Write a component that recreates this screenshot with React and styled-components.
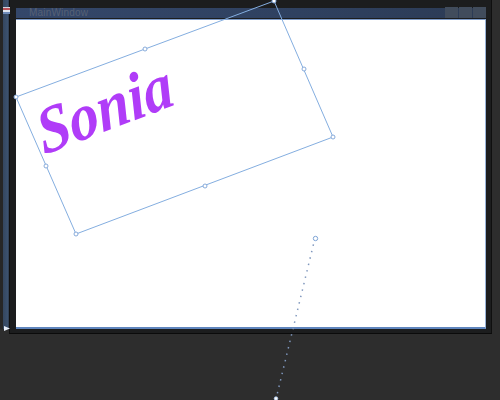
import React from "react";
import styled, { createGlobalStyle } from "styled-components";

const Global = createGlobalStyle`
  html, body { margin: 0; padding: 0; background: #2d2d2d; }
  #root { width: 500px; height: 400px; overflow: hidden; }
`;
const Stage = styled.div`
  position: relative;
  width: 500px;
  height: 400px;
  overflow: hidden;
  display: flex;
  align-items: flex-start;
  background: #2d2d2d;
`;
const SideRail = styled.div`
  position: relative;
  width: 9px;
  height: 329px;
  flex: none;
  box-sizing: border-box;
  padding-top: 7px;
  background: linear-gradient(90deg, #262626 0, #262626 3px, #34465f 3px, #3c526f 8px, #26303e 9px);
`;
const MenuGlyph = styled.div`
  width: 7px;
  height: 7px;
  margin-left: 3px;
  background: linear-gradient(180deg, #cfd6e2 0, #cfd6e2 20%, #b9525a 20%, #b9525a 42%, #dfe5ee 42%, #dfe5ee 70%, #6f8cb8 70%);
`;
const Window = styled.div`
  width: 483px;
  height: 334px;
  flex: none;
  box-sizing: border-box;
  padding: 8px 5px 4px 6px;
  display: flex;
  flex-direction: column;
  background: #1c1d1e;
  border-bottom: 1px solid #0b0b0b;
  border-right: 1px solid #0f0f0f;
  border-left: 1px solid #0f0f0f;
`;
const TitleBar = styled.div`
  height: 10px;
  flex: none;
  display: flex;
  align-items: center;
  justify-content: space-between;
  padding-left: 13px;
  background: linear-gradient(90deg, #34476a 0, #2f4160 60%, #2c3b55 100%);
`;
const Title = styled.span`
  font: 10px/10px "Liberation Sans", Arial, sans-serif;
  letter-spacing: 0.2px;
  color: #566176;
`;
const Controls = styled.div`
  display: flex;
  gap: 1px;
  height: 11px;
  margin-top: -1px;
`;
const ControlButton = styled.div`
  width: 13px;
  height: 11px;
  background: #414c5c;
`;
const Client = styled.div`
  flex: 1;
  background: #fff;
  margin-top: 1px;
  border-bottom: 2px solid #5f85bd;
  border-top: 1px solid #7f9cc8;
  border-right: 1px solid #9ab4d8;
`;
const Overlay = styled.svg`
  position: absolute;
  inset: 0;
  width: 500px;
  height: 400px;
  pointer-events: none;
`;
const Word = styled.text`
  font-family: "Liberation Serif", "Times New Roman", serif;
  font-style: italic;
  font-weight: 700;
  font-size: 66px;
  fill: #b03cf8;
`;

const box = [[16, 97], [274, 1], [333, 137], [76, 234]];
const mids = [[145, 49], [304, 69], [205, 186], [46, 166]];

export default function App() {
  return (
    <Stage>
      <Global />
      <SideRail><MenuGlyph /></SideRail>
      <Window>
        <TitleBar>
          <Title>MainWindow</Title>
          <Controls>
            <ControlButton /><ControlButton /><ControlButton />
          </Controls>
        </TitleBar>
        <Client />
      </Window>
      <Overlay viewBox="0 0 500 400">
        <Word transform="translate(44 155) rotate(-21) skewX(-6) scale(0.9 1)">Sonia</Word>
        <polygon points={box.map((p) => p.join(",")).join(" ")} fill="none" stroke="#84aee0" strokeWidth="1" />
        {[...box, ...mids].map(([x, y]) => (
          <circle key={`${x}-${y}`} cx={x} cy={y} r="2" fill="#fff" stroke="#7aa2d6" strokeWidth="0.9" />
        ))}
        <line x1="315" y1="238" x2="276" y2="399" stroke="#7f97bd" strokeWidth="1.5" strokeDasharray="1.5 5.1" />
        <circle cx="315.5" cy="238.5" r="2.2" fill="#fff" stroke="#7ea4d6" strokeWidth="1" />
        <circle cx="276" cy="398.5" r="1.8" fill="#fff" stroke="#9fbce4" strokeWidth="0.8" />
        <polygon points="4,326 10,328.5 4,331" fill="#e8effa" />
      </Overlay>
    </Stage>
  );
}
